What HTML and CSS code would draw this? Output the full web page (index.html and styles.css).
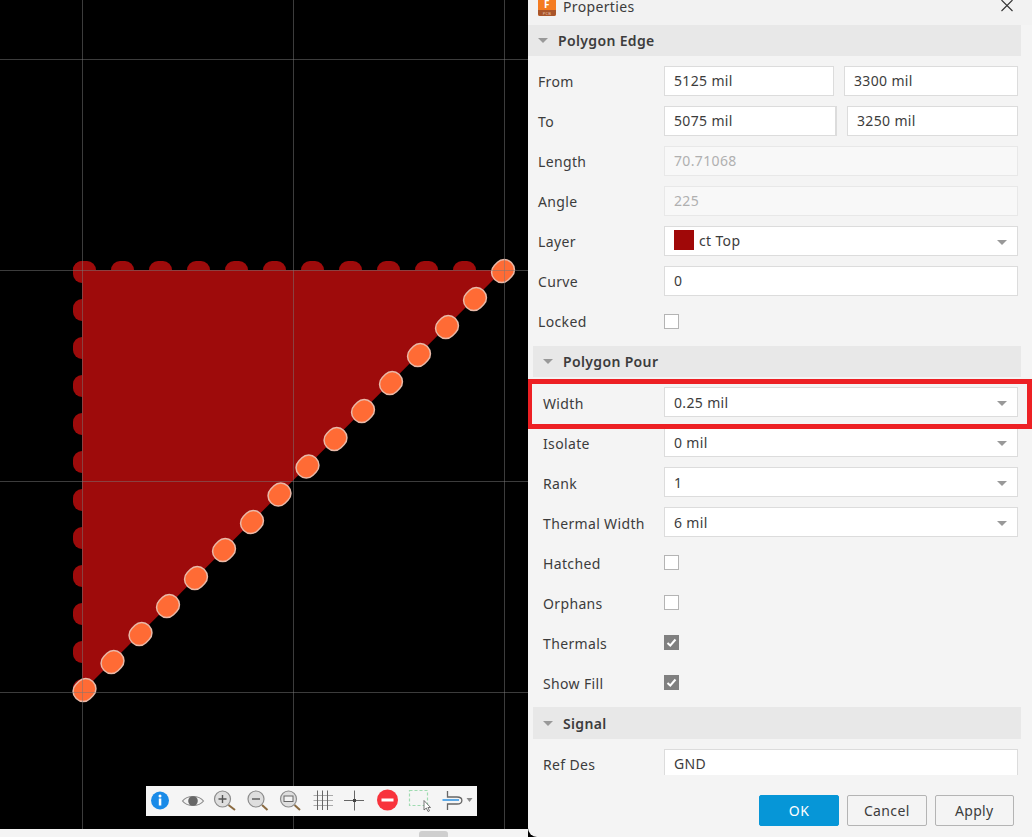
FILE: index.html
```html
<!DOCTYPE html>
<html lang="en">
<head>
    <meta charset="UTF-8">
    <title>Properties</title>
    <link rel="stylesheet" href="styles.css">
</head>
<body>
    <div class="app">
        <div class="left">
            <div class="canvas">
                <svg class="board" width="528" height="829" viewBox="0 0 528 829">
                    <defs>
                        <rect id="pad" x="-11.750" y="-10" width="23.500" height="20" rx="9.500" fill="#ff6b35" stroke="#e9b9a8" stroke-width="1.500" transform="rotate(-45)"/>
                        <path id="scallopTop" d="M0 9.500V9a9 9 0 0 1 9-9h5a9 9 0 0 1 9 9v.5z" fill="#9e0b0b"/>
                        <path id="scallopLeft" d="M9.500 0H9a9 9 0 0 0-9 9v4a9 9 0 0 0 9 9h.5z" fill="#9e0b0b"/>
                    </defs>

                    <!-- pour outline -->
                    <use href="#scallopTop" x="73" y="261"/>
                    <use href="#scallopTop" x="111" y="261"/>
                    <use href="#scallopTop" x="149" y="261"/>
                    <use href="#scallopTop" x="187" y="261"/>
                    <use href="#scallopTop" x="225" y="261"/>
                    <use href="#scallopTop" x="263" y="261"/>
                    <use href="#scallopTop" x="301" y="261"/>
                    <use href="#scallopTop" x="339" y="261"/>
                    <use href="#scallopTop" x="377" y="261"/>
                    <use href="#scallopTop" x="415" y="261"/>
                    <use href="#scallopTop" x="453" y="261"/>
                    <use href="#scallopLeft" x="73" y="261"/>
                    <use href="#scallopLeft" x="73" y="299"/>
                    <use href="#scallopLeft" x="73" y="337"/>
                    <use href="#scallopLeft" x="73" y="375"/>
                    <use href="#scallopLeft" x="73" y="413"/>
                    <use href="#scallopLeft" x="73" y="451"/>
                    <use href="#scallopLeft" x="73" y="489"/>
                    <use href="#scallopLeft" x="73" y="527"/>
                    <use href="#scallopLeft" x="73" y="565"/>
                    <use href="#scallopLeft" x="73" y="603"/>
                    <use href="#scallopLeft" x="73" y="641"/>
                    <use href="#scallopLeft" x="73" y="679"/>
                    <polygon points="82,270 503,270 84,690 82,690" fill="#9e0b0b"/>

                    <!-- edge pads -->
                    <use href="#pad" transform="translate(84.500 690)"/>
                    <use href="#pad" transform="translate(112.500 662)"/>
                    <use href="#pad" transform="translate(140.500 634)"/>
                    <use href="#pad" transform="translate(168 606)"/>
                    <use href="#pad" transform="translate(196 578)"/>
                    <use href="#pad" transform="translate(224 550)"/>
                    <use href="#pad" transform="translate(252 522)"/>
                    <use href="#pad" transform="translate(279.500 494.500)"/>
                    <use href="#pad" transform="translate(307.500 466.500)"/>
                    <use href="#pad" transform="translate(335.500 439)"/>
                    <use href="#pad" transform="translate(363 411)"/>
                    <use href="#pad" transform="translate(391 383)"/>
                    <use href="#pad" transform="translate(419 355)"/>
                    <use href="#pad" transform="translate(447 327)"/>
                    <use href="#pad" transform="translate(475 299)"/>
                    <use href="#pad" transform="translate(503 271)"/>

                    <!-- grid -->
                    <g stroke="#787878" stroke-opacity="0.5" stroke-width="1">
                        <path d="M82.500 0V829M293.500 0V829M504.500 0V829"/>
                        <path d="M0 59.500H528M0 270.500H528M0 481.500H528M0 692.500H528"/>
                    </g>
                </svg>

                <div class="toolbar">
                    <svg class="tool" viewBox="0 0 28 30">
                        <circle cx="14" cy="14.500" r="9" fill="#1a8be8"/>
                        <circle cx="14" cy="10" r="1.500" fill="#fff"/>
                        <rect x="12.800" y="12.500" width="2.500" height="7" fill="#fff"/>
                    </svg>
                    <svg class="tool" viewBox="0 0 28 30">
                        <path d="M3.500 15C8 9 20 9 24.500 15C20 21 8 21 3.500 15z" fill="#f2f2f2" stroke="#8c8c8c" stroke-width="1.200"/>
                        <circle cx="14" cy="15" r="4.800" fill="#666"/>
                    </svg>
                    <svg class="tool" viewBox="0 0 28 30">
                        <path d="M17.500 19L24 24" stroke="#8a6a40" stroke-width="2"/>
                        <circle cx="11.500" cy="13" r="8" fill="#dedede" stroke="#8c8c8c" stroke-width="1.200"/>
                        <path d="M7.500 13H15.500M11.500 9V17" stroke="#555" stroke-width="1.400"/>
                    </svg>
                    <svg class="tool" viewBox="0 0 28 30">
                        <path d="M18 19L23.500 24" stroke="#8a6a40" stroke-width="2"/>
                        <circle cx="12" cy="13" r="8" fill="#dedede" stroke="#8c8c8c" stroke-width="1.200"/>
                        <path d="M8 13H16" stroke="#555" stroke-width="1.400"/>
                    </svg>
                    <svg class="tool" viewBox="0 0 28 30">
                        <path d="M18.500 19L24 24" stroke="#8a6a40" stroke-width="2"/>
                        <circle cx="12.500" cy="13" r="8" fill="#dedede" stroke="#8c8c8c" stroke-width="1.200"/>
                        <rect x="8" y="10" width="9" height="5.500" fill="#f2f2f2" stroke="#666" stroke-width="1"/>
                    </svg>
                    <svg class="tool" viewBox="0 0 28 30">
                        <path d="M4.500 9.500H24M4.500 14.500H24M4.500 19.500H24" stroke="#aaa" stroke-width="1"/>
                        <path d="M8.500 4.500V24M13.500 4.500V24M18.500 4.500V24" stroke="#666" stroke-width="1"/>
                    </svg>
                    <svg class="tool" viewBox="0 0 28 30">
                        <path d="M3 14.500H23M13.500 4.500V24.500" stroke="#666" stroke-width="1"/>
                        <rect x="12" y="13" width="3" height="3" fill="#444"/>
                    </svg>
                    <svg class="tool" viewBox="0 0 28 30">
                        <circle cx="13.500" cy="14" r="10.500" fill="#f8333c"/>
                        <rect x="7.500" y="12.500" width="12" height="3" fill="#fff"/>
                    </svg>
                    <svg class="tool" viewBox="0 0 28 30">
                        <rect x="3.500" y="4.500" width="18" height="15" fill="none" stroke="#9fdcb1" stroke-width="1.200" stroke-dasharray="3 2"/>
                        <path d="M18 14.500V24L20.300 22L22 25.500L23.500 24.800L21.900 21.500H24.500z" fill="#fff" stroke="#555" stroke-width="0.800"/>
                    </svg>
                    <svg class="tool tool--route" viewBox="0 0 38 30">
                        <path d="M3.500 14H20" stroke="#2a8fe0" stroke-width="1.500"/>
                        <path d="M8.500 5V11H18C24.500 11 24.500 18 18 18H8.500V24" fill="none" stroke="#666" stroke-width="1.300"/>
                        <path d="M27.500 12H33.500L30.500 16z" fill="#888"/>
                    </svg>
                </div>
            </div>
            <div class="statusbar">
                <span class="statusbar-grip"></span>
            </div>
        </div>

        <div class="panel">
            <div class="title">
                <svg class="title-icon" width="18" height="16" viewBox="0 0 18 16">
                    <path d="M0 0H18V14a2 2 0 0 1-2 2H2a2 2 0 0 1-2-2z" fill="#f47b20"/>
                    <path d="M0 10H18V14a2 2 0 0 1-2 2H2a2 2 0 0 1-2-2z" fill="#a9552a"/>
                    <text x="9" y="8" text-anchor="middle" class="title-icon-f">F</text>
                    <text x="9" y="14.500" text-anchor="middle" class="title-icon-pcb">PCB</text>
                </svg>
                <span class="title-text">Properties</span>
                <svg class="close" width="12" height="12" viewBox="0 0 12 12">
                    <path d="M.5 0L11.500 11M11.500 0L.5 11" stroke="#333" stroke-width="1.100"/>
                </svg>
            </div>

            <div class="body">
                <div class="section section--raised">
                    <div class="section-head"><span class="caret"></span>Polygon Edge</div>
                    <div class="row">
                        <label class="label">From</label>
                        <div class="pair">
                            <input class="field from-x" type="text" value="5125 mil">
                            <input class="field from-y" type="text" value="3300 mil">
                        </div>
                    </div>
                    <div class="row">
                        <label class="label">To</label>
                        <div class="pair">
                            <input class="field to-x" type="text" value="5075 mil">
                            <input class="field to-y" type="text" value="3250 mil">
                        </div>
                    </div>
                    <div class="row">
                        <label class="label">Length</label>
                        <input class="field" type="text" value="70.71068" disabled>
                    </div>
                    <div class="row">
                        <label class="label">Angle</label>
                        <input class="field" type="text" value="225" disabled>
                    </div>
                    <div class="row">
                        <label class="label">Layer</label>
                        <div class="field select"><span class="swatch"></span>ct Top</div>
                    </div>
                    <div class="row">
                        <label class="label">Curve</label>
                        <input class="field" type="text" value="0">
                    </div>
                    <div class="row">
                        <label class="label">Locked</label>
                        <span class="check"></span>
                    </div>
                </div>

                <div class="section section--inset">
                    <div class="section-head"><span class="caret"></span>Polygon Pour</div>
                    <div class="row">
                        <label class="label">Width</label>
                        <div class="field select">0.25 mil</div>
                    </div>
                    <div class="row">
                        <label class="label">Isolate</label>
                        <div class="field select">0 mil</div>
                    </div>
                    <div class="row">
                        <label class="label">Rank</label>
                        <div class="field select">1</div>
                    </div>
                    <div class="row">
                        <label class="label">Thermal Width</label>
                        <div class="field select">6 mil</div>
                    </div>
                    <div class="row">
                        <label class="label">Hatched</label>
                        <span class="check"></span>
                    </div>
                    <div class="row">
                        <label class="label">Orphans</label>
                        <span class="check"></span>
                    </div>
                    <div class="row">
                        <label class="label">Thermals</label>
                        <span class="check check--on">
                            <svg width="15" height="15" viewBox="0 0 15 15"><path d="M3.500 8L6.300 10.500L11.500 4.500" fill="none" stroke="#fff" stroke-width="2"/></svg>
                        </span>
                    </div>
                    <div class="row">
                        <label class="label">Show Fill</label>
                        <span class="check check--on">
                            <svg width="15" height="15" viewBox="0 0 15 15"><path d="M3.500 8L6.300 10.500L11.500 4.500" fill="none" stroke="#fff" stroke-width="2"/></svg>
                        </span>
                    </div>
                </div>

                <div class="section section--inset section--signal">
                    <div class="section-head"><span class="caret"></span>Signal</div>
                    <div class="row">
                        <label class="label">Ref Des</label>
                        <input class="field" type="text" value="GND">
                    </div>
                </div>
            </div>

            <div class="footer">
                <button class="btn btn--primary" type="button">OK</button>
                <button class="btn" type="button">Cancel</button>
                <button class="btn" type="button">Apply</button>
            </div>

            <div class="highlight"></div>
        </div>
    </div>
</body>
</html>
```

FILE: styles.css
```css
* {
    box-sizing: border-box;
}

html, body {
    margin: 0;
    padding: 0;
    height: 837px;
    overflow: hidden;
}

body {
    font-family: "Noto Sans", "Open Sans", sans-serif;
    font-size: 14px;
    letter-spacing: 0.35px;
    color: #3c3c3c;
    background: #f5f5f5;
}

.app {
    display: flex;
    width: 1032px;
    height: 837px;
    background: #000;
}

/* board side */
.left {
    width: 528px;
    display: flex;
    flex-direction: column;
}

.canvas {
    position: relative;
    height: 829px;
    background: #000;
    overflow: hidden;
}

.board {
    display: block;
}

.toolbar {
    position: absolute;
    left: 146px;
    top: 786px;
    width: 331px;
    height: 30px;
    display: flex;
    gap: 4.5px;
    background: #f5f5f5;
}

.tool {
    width: 28px;
    height: 30px;
    flex: none;
}

.tool--route {
    width: 38px;
}

.statusbar {
    flex: 1;
    background: #f4f4f4;
    position: relative;
}

.statusbar-grip {
    position: absolute;
    left: 419px;
    top: 2px;
    width: 29px;
    height: 8px;
    border-radius: 3px;
    background: #cfcfcf;
}

/* properties panel */
.panel {
    position: relative;
    width: 504px;
    height: 837px;
    background: #f4f4f4;
    border-bottom-left-radius: 9px;
    overflow: hidden;
}

.title {
    height: 25px;
    background: #f2f2f2;
    display: flex;
    align-items: flex-start;
    padding-left: 10px;
}

.title-icon {
    flex: none;
}

.title-icon-f {
    font-size: 10px;
    font-weight: 700;
    fill: #fff;
}

.title-icon-pcb {
    font-size: 4px;
    fill: #e8c8b0;
}

.title-text {
    margin-left: 7px;
    line-height: 14px;
}

.close {
    margin-left: auto;
    margin-right: 19px;
}

.body {
    width: 493px;
    height: 750px;
    overflow: hidden;
}

.section--inset {
    padding-left: 5px;
}

.section-head {
    height: 31px;
    background: #e8e8e8;
    margin-bottom: 5px;
    display: flex;
    align-items: center;
    padding-left: 10px;
    font-weight: 600;
    color: #3c3c3c;
}

.section--inset .section-head {
    margin-top: 5px;
}

.section--signal .section-head {
    height: 32px;
}

.caret {
    width: 0;
    height: 0;
    border-left: 5px solid transparent;
    border-right: 5px solid transparent;
    border-top: 5px solid #999;
    margin-right: 10px;
}

.row {
    height: 40px;
    display: flex;
    align-items: center;
    padding-left: 10px;
    padding-right: 3px;
}

.label {
    flex: none;
    width: 126px;
    padding-top: 2px;
}

.section--raised .label,
.section--signal .label {
    padding-top: 0;
}

.section--inset .label {
    width: 121px;
}

.field {
    flex: 1;
    min-width: 0;
    height: 30px;
    padding: 0 9px;
    border: 1px solid #dcdcdc;
    background: #fff;
    font-family: inherit;
    font-size: 14px;
    letter-spacing: 0.35px;
    color: #3c3c3c;
    outline: none;
}

/* these values sit a pixel above the box centre */
.section--raised .field,
.section--signal .field {
    padding-bottom: 2px;
}

.field:disabled {
    background: #f8f8f8;
    border-color: #e8e8e8;
    color: #b0b0b0;
}

.pair {
    flex: 1;
    display: flex;
}

.pair .field {
    flex: none;
}

.from-x {
    width: 170px;
    margin-right: 10px;
}

.from-y {
    width: 174px;
}

.to-x {
    width: 173px;
    margin-right: 10px;
    border-right-width: 2px;
}

.to-y {
    width: 171px;
}

.select {
    position: relative;
    display: flex;
    align-items: center;
}

.select::after {
    content: "";
    position: absolute;
    right: 10px;
    top: 13px;
    border-left: 5px solid transparent;
    border-right: 5px solid transparent;
    border-top: 5px solid #999;
}

.swatch {
    width: 20px;
    height: 20px;
    background: #a00808;
    margin-right: 5px;
}

.check {
    width: 15px;
    height: 15px;
    background: #fff;
    border: 1px solid #b4b4b4;
    display: block;
}

.check--on {
    background: #808080;
    border: none;
}

.check--on svg {
    display: block;
}

.footer {
    display: flex;
    justify-content: flex-end;
    gap: 8px;
    padding: 20px 18px 0 0;
}

.btn {
    width: 79.5px;
    height: 31px;
    border: 1px solid #b4b4b4;
    border-radius: 2px;
    background: #f4f4f4;
    font-family: inherit;
    font-size: 14px;
    letter-spacing: 0.35px;
    color: #3c3c3c;
}

.btn--primary {
    width: 80px;
    background: #0696d7;
    border-color: #0696d7;
    color: #fff;
}

/* annotation drawn over the screenshot */
.highlight {
    position: absolute;
    left: -1px;
    top: 379px;
    width: 505px;
    height: 50px;
    border: 5px solid #ed2024;
}
```
